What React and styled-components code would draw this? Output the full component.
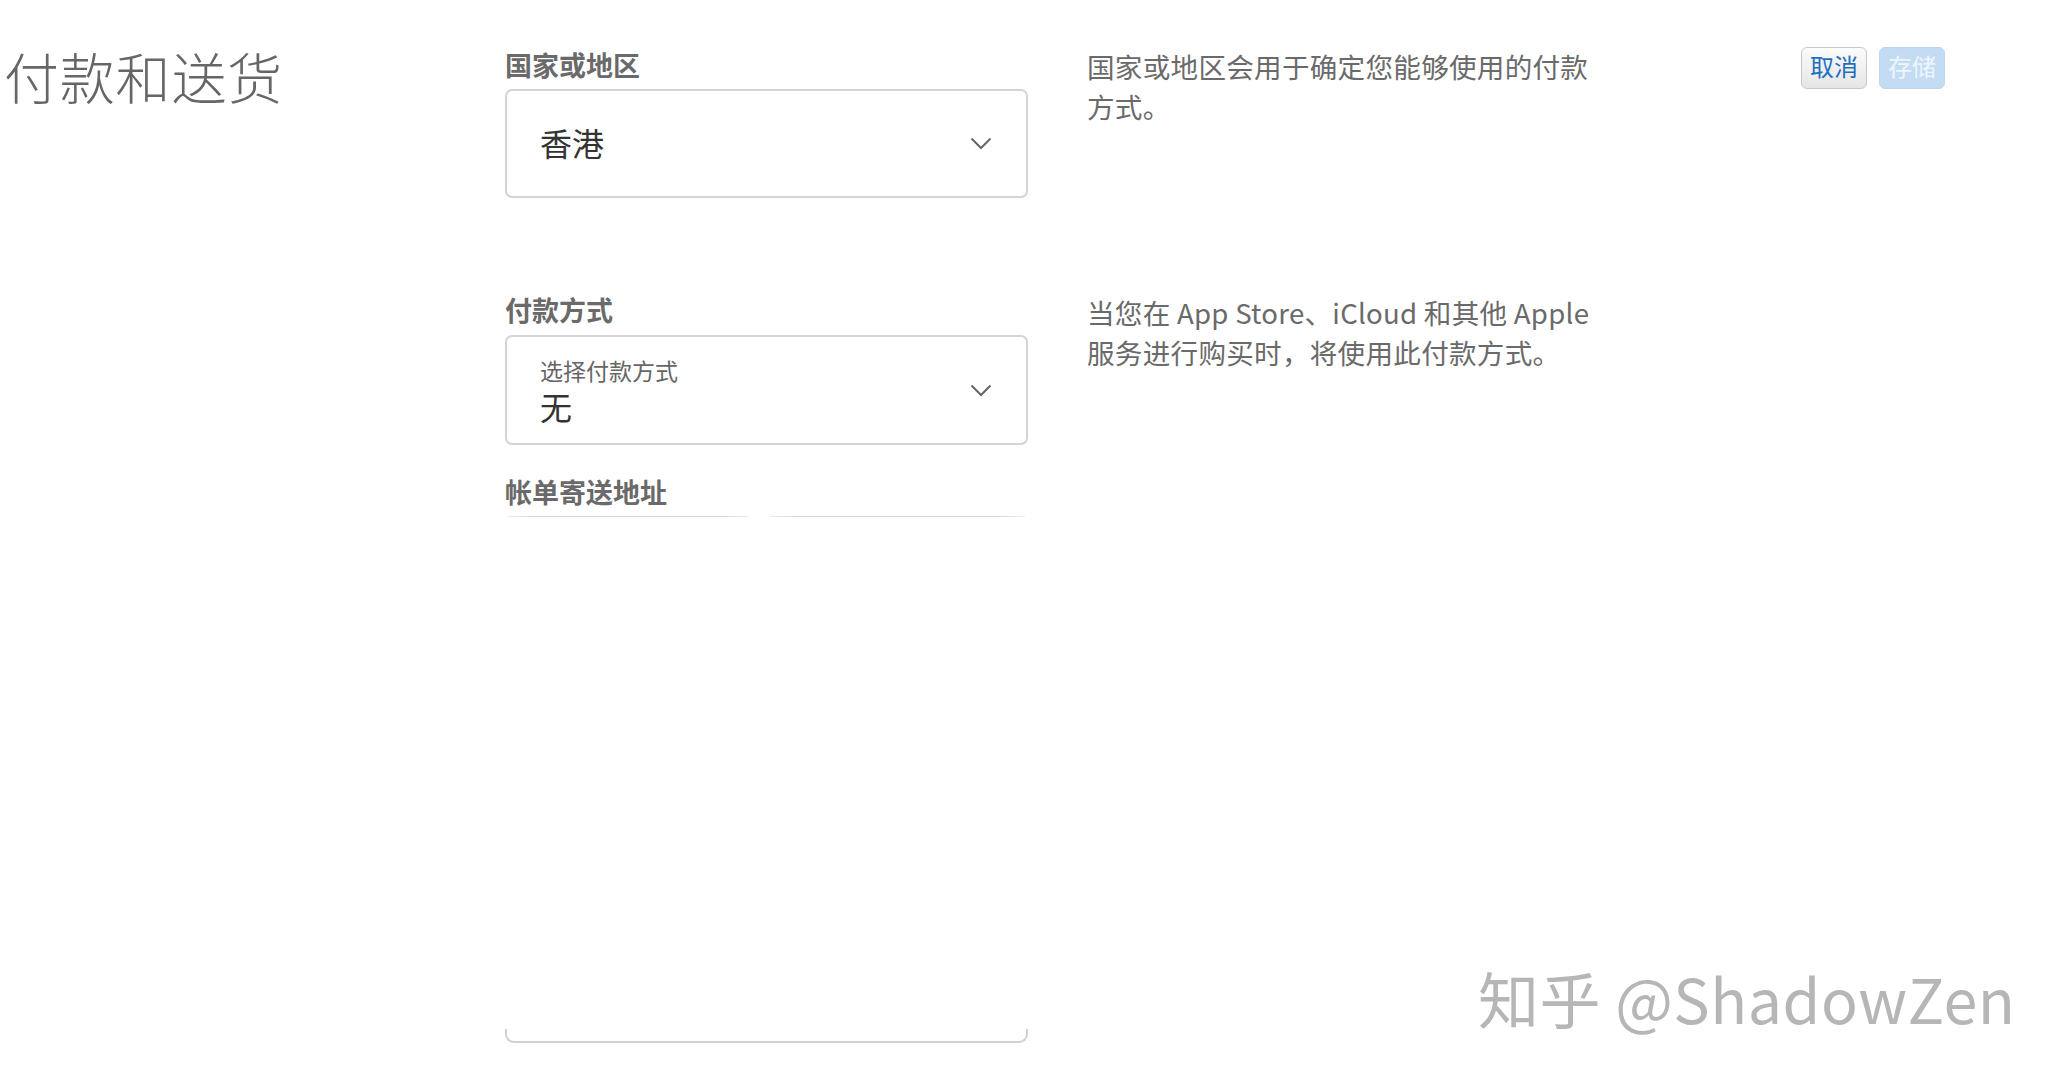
import React from 'react'
import styled, { createGlobalStyle } from 'styled-components'

const Global = createGlobalStyle`
    html, body {
        margin: 0;
        padding: 0;
        background: #ffffff;
    }
    body {
        font-family: "Noto Sans CJK SC", "Noto Sans", sans-serif;
    }
`

const Page = styled.div`
    position: relative;
    display: flex;
    width: 2069px;
    height: 1080px;
    overflow: hidden;
    background: #fff;
`
const TitleCol = styled.div`
    width: 505px;
    flex-shrink: 0;
    padding: 45px 0 0 4px;
    box-sizing: border-box;
`
const Title = styled.h1`
    margin: 0;
    font-size: 55px;
    line-height: 60px;
    font-weight: 300;
    color: #666;
    letter-spacing: 0.8px;
`
const Main = styled.div`
    display: flex;
    flex-direction: column;
    padding-top: 47px;
`
const Section = styled.div`
    display: grid;
    grid-template-columns: 523px 510px;
    column-gap: 59px;
    margin-bottom: ${p => p.gap || 0}px;
`
const Field = styled.div`
    display: flex;
    flex-direction: column;
`
const Label = styled.div`
    font-size: 27px;
    line-height: 36px;
    font-weight: 700;
    color: #6a6a6a;
    margin-bottom: ${p => p.gap || 7}px;
`
const Select = styled.div`
    height: ${p => p.h}px;
    box-sizing: border-box;
    border: 2px solid #d4d4d4;
    border-radius: 7px;
    display: flex;
    align-items: center;
    justify-content: space-between;
    padding: 0 34px 0 33px;
`
const SelectText = styled.div`
    display: flex;
    flex-direction: column;
`
const Hint = styled.div`
    font-size: 23px;
    line-height: 30px;
    color: #666;
    margin-top: 2px;
`
const Value = styled.div`
    font-size: 32px;
    line-height: 42px;
    color: #333;
    margin-bottom: ${p => p.lift || 0}px;
`
const Desc = styled.p`
    margin: ${p => p.shift || 0}px 0 0;
    font-size: 27.6px;
    line-height: 40px;
    letter-spacing: 0.25px;
    color: #6a6a6a;
    white-space: nowrap;
`
const AddressRow = styled.div`
    display: flex;
    gap: 21px;
    padding: 0 3px;
`
const AddressLine = styled.div`
    flex: ${p => p.grow};
    height: 1px;
    background: linear-gradient(to right, #eee, #d8d8d8 10%, #d8d8d8 90%, #eee);
`
const AddressBody = styled.div`
    height: 512px;
`
const AddressBottom = styled.div`
    height: 12px;
    border: 2px solid #d0d0d0;
    border-top: none;
    border-radius: 0 0 9px 9px;
`
const Actions = styled.div`
    display: flex;
    gap: 12px;
    margin-left: 204px;
    padding-top: 47px;
    align-items: flex-start;
`
const Button = styled.button`
    width: 66px;
    height: 42px;
    padding: 0 0 4px;
    box-sizing: border-box;
    border-radius: 6px;
    font-family: "Noto Sans CJK SC", sans-serif;
    font-size: 24px;
    line-height: 1;
    border: 1.5px solid ${p => (p.primary ? '#bcd7f2' : '#c8c8c8')};
    background: ${p => (p.primary ? '#c3dcf4' : 'linear-gradient(#fbfbfb, #e6e6e6)')};
    color: ${p => (p.primary ? '#eef5fd' : '#1f6fbf')};
`
const Watermark = styled.div`
    position: absolute;
    left: 1478px;
    top: 958px;
    font-family: "Noto Sans CJK SC", "Noto Sans", sans-serif;
    font-size: 61px;
    line-height: 80px;
    font-weight: 400;
    color: #b6b6b6;
    white-space: nowrap;
    letter-spacing: 0.5px;
`

const Chevron = () => (
    <svg width="22" height="13" viewBox="0 0 22 13">
        <polyline points="1.5,1.5 11,11 20.5,1.5" fill="none" stroke="#666" strokeWidth="2" />
    </svg>
)

export default function App() {
    return (
        <Page>
            <Global />
            <TitleCol>
                <Title>付款和送货</Title>
            </TitleCol>
            <Main>
                <Section gap={94}>
                    <Field>
                        <Label gap={6}>国家或地区</Label>
                        <Select h={109}>
                            <Value lift={4}>香港</Value>
                            <Chevron />
                        </Select>
                    </Field>
                    <Desc shift={-1}>
                        国家或地区会用于确定您能够使用的付款<br />方式。
                    </Desc>
                </Section>
                <Section>
                    <Field>
                        <Label>付款方式</Label>
                        <Select h={110}>
                            <SelectText>
                                <Hint>选择付款方式</Hint>
                                <Value>无</Value>
                            </SelectText>
                            <Chevron />
                        </Select>
                        <Label gap={6} style={{ marginTop: 29 }}>帐单寄送地址</Label>
                        <AddressRow>
                            <AddressLine grow={240} />
                            <AddressLine grow={254} />
                        </AddressRow>
                        <AddressBody />
                        <AddressBottom />
                    </Field>
                    <Desc>
                        当您在 App Store、iCloud 和其他 Apple<br />服务进行购买时，将使用此付款方式。
                    </Desc>
                </Section>
            </Main>
            <Actions>
                <Button>取消</Button>
                <Button primary>存储</Button>
            </Actions>
            <Watermark>知乎 @ShadowZen</Watermark>
        </Page>
    )
}
